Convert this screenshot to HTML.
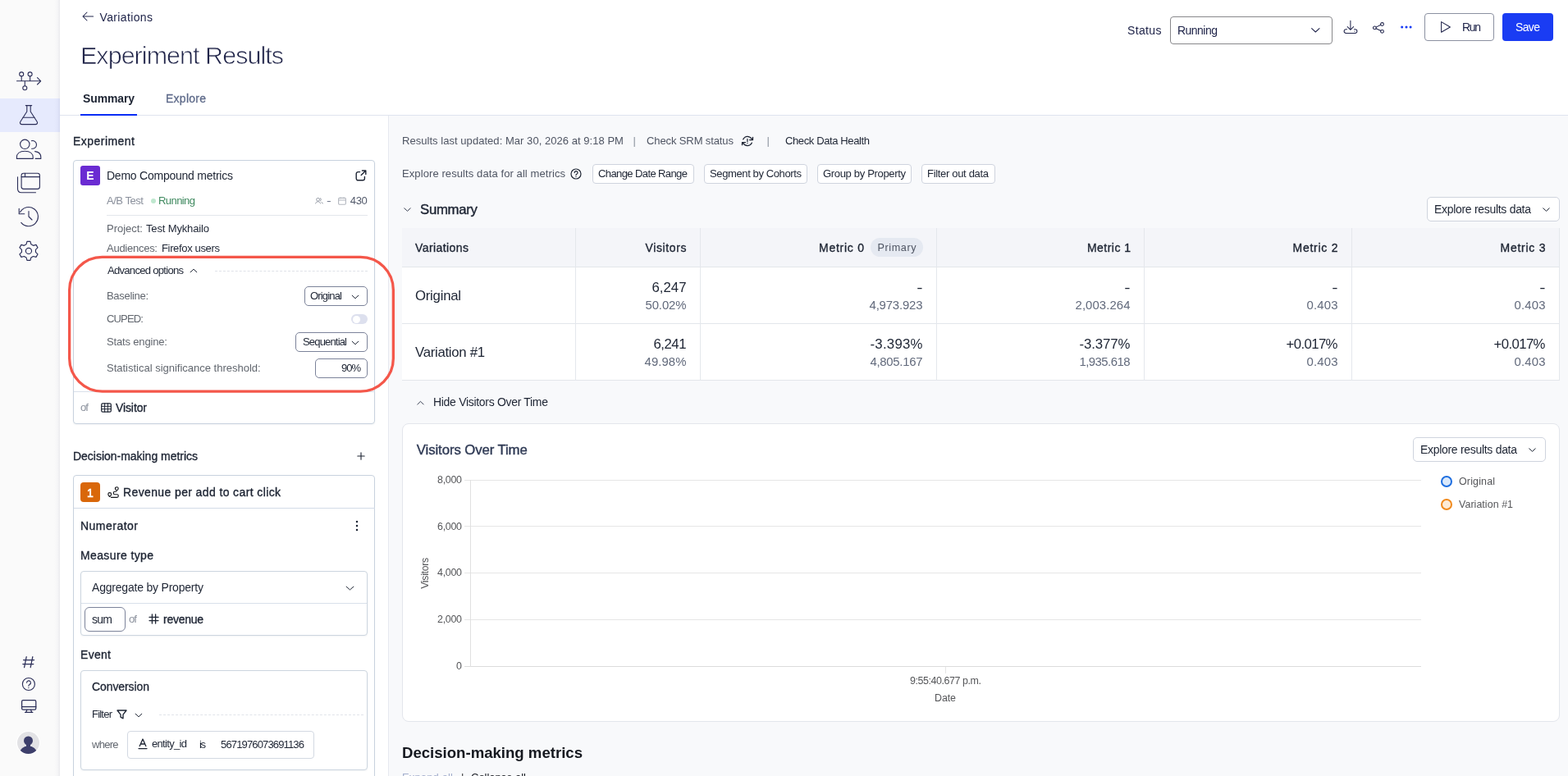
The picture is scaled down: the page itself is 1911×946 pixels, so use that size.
<!DOCTYPE html>
<html lang="en">
<head>
<meta charset="utf-8">
<title>Experiment Results</title>
<style>
*{box-sizing:border-box;margin:0;padding:0}
html,body{width:1911px;height:946px;overflow:hidden;background:#fff}
body{font-family:"Liberation Sans",sans-serif;color:#1d2433;font-size:13px;position:relative}
.a{position:absolute}
#tx{position:absolute;left:0;top:0;width:1911px;height:946px;will-change:transform;z-index:3}
.t{position:absolute;white-space:nowrap;line-height:20px}
svg{display:block;position:absolute;overflow:visible}
#side{position:absolute;left:0;top:0;width:73px;height:946px;background:linear-gradient(90deg,#fafafa 0,#fafafa 66px,#f6f6f7 70px,#ebebee 73px)}
#side .act{position:absolute;left:0;top:120px;width:73px;height:41px;background:linear-gradient(90deg,#e6eafd 0,#e6eafd 66px,#e2e6fa 70px,#d6daf2 73px)}
.si{fill:none;stroke:#2b2e58;stroke-width:1.1;stroke-linecap:round;stroke-linejoin:round}
#hdr{position:absolute;left:73px;top:0;width:1838px;height:141px;background:#fff;border-bottom:1px solid #dfe4ef}
#left{position:absolute;left:73px;top:141px;width:401px;height:805px;background:#fff;border-right:1px solid #e6e9f0}
#right{position:absolute;left:474px;top:141px;width:1437px;height:805px;background:#f8f9fb}
.card{position:absolute;background:#fff;border:1px solid #c8d2de;border-radius:4px}
.box{position:absolute;background:#fff;border:1px solid #ccd5df;border-radius:4px}
.btn{position:absolute;background:#fff;border:1px solid #cfd4de;border-radius:5px}
.sel{position:absolute;background:#fff;border:1px solid #6f7690;border-radius:5px}
.ln{position:absolute;background:#dfe4ec;height:1px}
.vl{position:absolute;background:#e4e7ec;width:1px}
.ic{fill:none;stroke:#1d2433;stroke-width:1.3;stroke-linecap:round;stroke-linejoin:round}
.hn{stroke:#22264d}
.hn path,.hn circle{stroke-width:1.05}
</style>
</head>
<body>
<div id="side"><div class="act"></div>
<svg class="si" style="left:0;top:0" width="73" height="946" viewBox="0 0 73 946">
<path d="M20.5 98.8H49.5M45.5 94.6l4.2 4.2-4.2 4.2M26.2 93v5.8M36.6 93v5.8M30.3 98.8v5.9"/>
<circle cx="26.2" cy="90.4" r="2.5"/><circle cx="36.6" cy="90.4" r="2.5"/><circle cx="30.3" cy="107.3" r="2.5"/>
<path d="M31.3 128.6h7.4M32.8 128.6v7.4l-7.9 12.3c-1.2 1.9 0 3.3 1.8 3.3h16.6c1.8 0 3-1.4 1.8-3.3l-7.9-12.3v-7.4M27.7 143.2h14.6"/>
<circle cx="30.3" cy="175.8" r="5.7"/>
<path d="M20.4 193.4v-1.6c0-4.2 3.4-7.5 9.9-7.5s9.9 3.3 9.9 7.5v1.6z"/>
<path d="M38.6 171.6a4.9 4.9 0 1 1 0 9.6M42.6 184.6c4.6 0.5 7.2 3.3 7.2 7.2v1.6h-6.6"/>
<rect x="26.1" y="211.2" width="22.3" height="19.2" rx="2.6"/>
<path d="M26.1 215.6h22.3M30.5 211.2v4.4M21.5 215.8v14.2c0 3 1.6 4.7 4.6 4.7h17.4"/>
<path d="M24.6 258.6a11.6 11.6 0 1 1 1.2 12.8M23.2 254.2v6.6h6.6M35 257.6v6.4l4 4"/>
<g transform="translate(34.95 305.9) scale(1.05) translate(-34.9 -305.4)"><circle cx="34.9" cy="305.4" r="3.4"/>
<path d="M33 294.45h3.8l.9 3.3 2.5 1.4 3.3-.9 1.9 3.3-2.4 2.4v2.9l2.4 2.4-1.9 3.3-3.3-.9-2.5 1.4-.9 3.3H33l-.9-3.3-2.5-1.4-3.3.9-1.9-3.3 2.4-2.4v-2.9l-2.4-2.4 1.9-3.3 3.3.9 2.5-1.4z"/></g>
<path d="M32.2 800.6l-2.6 13M39.8 800.6l-2.6 13M28.6 804.6h13M27.8 809.6h13" stroke-width="1.25"/>
<circle cx="34.9" cy="834" r="7.5" stroke-width="1.15"/>
<path d="M32.6 832.2a2.4 2.4 0 1 1 3.4 2.2c-.8.4-1.1.9-1.1 1.8M34.9 838.4v.2" stroke-width="1.15"/>
<rect x="26.6" y="853.6" width="17.2" height="11.6" rx="1.6" stroke-width="1.25"/>
<path d="M26.6 861.6h17.2M32.8 865.4l-1 2.8M37.6 865.4l1 2.8M30.6 868.4h9.2" stroke-width="1.25"/>
</svg>
<svg style="left:20px;top:891px" width="29" height="29" viewBox="0 0 29 29"><defs><clipPath id="av"><circle cx="14.5" cy="14.5" r="13.5"/></clipPath></defs>
<circle cx="14.5" cy="14.5" r="14.5" fill="#fff"/><circle cx="14.5" cy="14.5" r="13.5" fill="#e2e2e5"/>
<g clip-path="url(#av)" fill="#3d3f6b"><circle cx="14.5" cy="12" r="5.500"/><rect x="12" y="15" width="5" height="5"/><ellipse cx="14.500" cy="27" rx="10.500" ry="8.400"/></g></svg>
</div>
<div id="hdr"></div>
<svg class="ic hn" style="left:99px;top:13px" width="16" height="14" viewBox="0 0 16 14"><path d="M14.6 7H2.2M7 2L2 7l5 5" stroke-width="1.2"/></svg>
<div class="a" style="left:98px;top:139px;width:68.5px;height:2px;background:#0a2cf5"></div>
<div class="sel" style="left:1426px;top:20px;width:198px;height:34px;border-color:#88888b;border-radius:4px"></div>
<svg class="ic hn" style="left:1597.5px;top:33.5px" width="11" height="6" viewBox="0 0 11 6"><path d="M.6 .6l4.700 4.400 4.700-4.400" stroke-width="1.1"/></svg>
<svg class="ic hn" style="left:1637px;top:24px" width="18" height="18" viewBox="0 0 18 18"><path d="M8.9 1.2v11M5.2 8.6l3.7 3.7 3.7-3.7M4.6 11.8H3.4a2.2 2.2 0 0 0 0 4.6h11.2a2.2 2.2 0 0 0 0-4.6h-1.2M14 14.1v.1" stroke-width="1.2"/></svg>
<svg class="ic hn" style="left:1672px;top:26px" width="16" height="16" viewBox="0 0 16 16"><circle cx="3.4" cy="7.9" r="1.9"/><circle cx="12.5" cy="3.5" r="1.9"/><circle cx="12.5" cy="12.3" r="1.9"/><path d="M5.1 7.1l5.7-2.8M5.1 8.7l5.7 2.8" stroke-width="1.2"/></svg>
<svg style="left:1706px;top:31px" width="16" height="4" viewBox="0 0 16 4" fill="#1a3df5"><circle cx="2.7" cy="2" r="1.55"/><circle cx="8" cy="2" r="1.55"/><circle cx="13.1" cy="2" r="1.55"/></svg>
<div class="sel" style="left:1736px;top:16px;width:85px;height:34px;border-color:#8b91a1;border-radius:4px"></div>
<svg class="ic hn" style="left:1755px;top:25px" width="14" height="16" viewBox="0 0 14 16"><path d="M1.6 1.6v12.6L12.4 8z" stroke-width="1.2"/></svg>
<div class="a" style="left:1831px;top:16px;width:62px;height:34px;background:#1a3cf3;border-radius:4px"></div>
<div id="left"></div>
<div class="card" style="left:89px;top:195px;width:368px;height:322px;box-shadow:0 1px 2px rgba(20,30,60,.05)"></div>
<div class="a" style="left:98px;top:202px;width:24px;height:24px;background:#6a2bd2;border-radius:3px"></div>
<svg class="ic" style="left:433px;top:207px" width="14" height="14" viewBox="0 0 14 14"><path d="M5.6 2.6H3.4A2.2 2.2 0 0 0 1.2 4.8v5.8a2.2 2.2 0 0 0 2.2 2.2h5.8a2.2 2.2 0 0 0 2.2-2.2V8.4M8.4 1h4.4v4.4M12.6 1.2L7.2 6.6" stroke-width="1.4"/></svg>
<div class="a" style="left:184px;top:242px;width:6px;height:6px;border-radius:3px;background:#bfe8cf"></div>
<svg style="left:384px;top:241px;fill:none;stroke:#8a909c;stroke-width:0.9" width="10" height="8" viewBox="0 0 10 8"><circle cx="3.6" cy="2.3" r="1.9"/><path d="M6 .5a1.9 1.9 0 0 1 0 3.6M.6 7.4c.4-1.8 1.5-2.6 3-2.6s2.6.8 3 2.6M7.6 5.4c1 .3 1.6 1 1.8 2"/></svg>
<svg style="left:412px;top:239.500px;fill:none;stroke:#b4b8c0;stroke-width:1.1" width="10" height="10" viewBox="0 0 10 10"><rect x=".6" y="1.4" width="8.8" height="7.8" rx="1.2"/><path d="M.6 4h8.8M3 .4v1.8M7 .4v1.8"/></svg>
<div class="ln" style="left:130px;top:262px;width:318px;background:#e3e6ec"></div>
<svg class="ic" style="left:231px;top:327px" width="10" height="6" viewBox="0 0 10 6"><path d="M1.200 4.800l3.800-3.600 3.800 3.600" stroke-width="1"/></svg>
<div class="a" style="left:262px;top:330px;width:186px;height:0;border-top:1px dashed #dfe2e8"></div>
<div class="sel" style="left:371px;top:349px;width:77px;height:24px;border-color:#7c839a"></div>
<svg class="ic" style="left:428px;top:358.5px" width="10" height="6" viewBox="0 0 10 6"><path d="M1.200 1.200l3.800 3.600 3.800-3.600" stroke-width="1"/></svg>
<div class="a" style="left:428px;top:383px;width:20px;height:12px;border-radius:6px;background:#dde0ee"></div><div class="a" style="left:429.500px;top:384.500px;width:9px;height:9px;border-radius:4.500px;background:#fff"></div>
<div class="sel" style="left:360px;top:405px;width:88px;height:24px;border-color:#7c839a"></div>
<svg class="ic" style="left:428px;top:414.5px" width="10" height="6" viewBox="0 0 10 6"><path d="M1.200 1.200l3.800 3.600 3.800-3.600" stroke-width="1"/></svg>
<div class="sel" style="left:384px;top:437px;width:64px;height:24px;border-color:#7c839a"></div>
<div class="ln" style="left:90px;top:477px;width:367px;background:#d9e0ea"></div>
<svg class="ic" style="left:123px;top:491px" width="13" height="12" viewBox="0 0 13 12"><rect x=".7" y=".9" width="11.6" height="10.2" rx="1.4" stroke-width="1.2"/><path d="M.7 4.3h11.6M.7 7.7h11.6M4.6 .9v10.2M8.4 .9v10.2" stroke-width="1"/></svg>
<svg style="left:0;top:0;z-index:5" width="1911" height="946" viewBox="0 0 1911 946"><rect x="84.65" y="313.45" width="394.7" height="163.6" rx="40" ry="40" fill="none" stroke="#f4574a" stroke-width="3.3"/></svg>
<svg class="ic" style="left:435px;top:551px" width="10" height="10" viewBox="0 0 10 10"><path d="M5 .8v8.4M.8 5h8.4" stroke-width="1.1"/></svg>
<div class="card" style="left:89px;top:579px;width:368px;height:380px"></div>
<div class="a" style="left:98px;top:588px;width:24px;height:24px;background:#d9670a;border-radius:4px"></div>
<svg class="ic" style="left:131px;top:593px" width="14" height="14" viewBox="0 0 14 14"><path d="M11.3 5.100C9.900 4 9.400 3.200 9.400 2.600a1.900 1.900 0 0 1 3.800 0C13.200 3.200 12.700 4 11.300 5.100zM2.700 12.500C1.300 11.300.8 10.300.8 9.550a1.900 1.900 0 0 1 3.800 0C4.600 10.300 4.100 11.300 2.700 12.500zM10.800 6.200H9a1.750 1.750 0 0 0 0 3.500h2.500a1.800 1.800 0 0 1 0 3.600H4.400" stroke-width="1.15" stroke="#16181d"/></svg>
<div class="ln" style="left:90px;top:619px;width:367px;background:#d3dbe7"></div>
<svg style="left:432.5px;top:634px" width="4" height="14" viewBox="0 0 4 14" fill="#1d2433"><circle cx="2" cy="2" r="1.25"/><circle cx="2" cy="7" r="1.25"/><circle cx="2" cy="12" r="1.25"/></svg>
<div class="box" style="left:98px;top:696px;width:350px;height:79px;box-shadow:0 1px 2px rgba(20,30,60,.05)"></div>
<svg class="ic" style="left:420.5px;top:713.5px" width="11" height="6" viewBox="0 0 11 6"><path d="M1.200 1.200l4.300 3.800 4.300-3.800" stroke-width="1"/></svg>
<div class="ln" style="left:99px;top:735px;width:348px;background:#d9e0ea"></div>
<div class="sel" style="left:103px;top:740px;width:50px;height:30px;border-color:#7c839a;border-radius:6px"></div>
<svg class="ic" style="left:181px;top:748px" width="13" height="13" viewBox="0 0 13 13"><path d="M4.400 1v11M8.600 1v11M1 4.400h11M1 8.600h11" stroke-width="1.3"/></svg>
<div class="box" style="left:98px;top:817px;width:350px;height:122px;box-shadow:0 1px 2px rgba(20,30,60,.05)"></div>
<svg class="ic" style="left:142px;top:865px" width="13" height="12" viewBox="0 0 13 12"><path d="M1 1h11L8 6.200v4.600L5 9.200v-3z" stroke-width="1.35"/></svg>
<svg class="ic" style="left:164px;top:868.5px" width="10" height="6" viewBox="0 0 10 6"><path d="M1.200 1.200l3.800 3.600 3.800-3.600" stroke-width="1"/></svg>
<div class="a" style="left:194px;top:871px;width:249px;height:0;border-top:1px dashed #e1e4ea"></div>
<div class="box" style="left:155px;top:891px;width:228px;height:34px;border-color:#d3d9e2"></div>
<svg class="ic" style="left:168px;top:900px" width="12" height="14" viewBox="0 0 12 14"><path d="M2.200 9.600L6 1l3.800 8.600M3.400 7h5.200M1 12.600h10" stroke-width="1.3"/></svg>
<div id="right"></div>
<svg class="ic" style="left:904px;top:165px" width="14" height="14" viewBox="0 0 14 14"><path d="M1.700 4.900C3 2.400 4.800 1.300 6.800 1.300c2.400 0 4.400 1.400 5.800 3.400M13.500 2.300v3.200h-4M12.300 9.100C11 11.500 9.100 12.600 6.900 12.600c-2.300 0-4.300-1.300-5.700-3.400M.5 11.700V8.500h4M6.900 4.400v3.300M6.900 9.600v.1" stroke-width="1.25"/></svg>
<svg class="ic" style="left:695px;top:205px" width="14" height="14" viewBox="0 0 14 14"><circle cx="7" cy="7" r="6" stroke-width="1.2"/><path d="M5.200 5.600a1.900 1.900 0 1 1 2.700 1.700c-.6.300-.9.700-.9 1.300M7 10.300v.1" stroke-width="1.200"/></svg>
<div class="btn" style="left:722px;top:200px;width:124px;height:24px;border-radius:4px"></div>
<div class="btn" style="left:858px;top:200px;width:126px;height:24px;border-radius:4px"></div>
<div class="btn" style="left:996px;top:200px;width:115px;height:24px;border-radius:4px"></div>
<div class="btn" style="left:1123px;top:200px;width:90px;height:24px;border-radius:4px"></div>
<svg class="ic" style="left:492px;top:253px;stroke:#3a4255" width="9" height="6" viewBox="0 0 9 6"><path d="M.8 .8l3.700 3.600L8.200 .8" stroke-width="1"/></svg>
<div class="btn" style="left:1739px;top:240px;width:162px;height:30px"></div>
<svg class="ic" style="left:1879.500px;top:253px" width="9" height="6" viewBox="0 0 9 6"><path d="M.8 .8l3.700 3.600L8.200 .8" stroke-width="1"/></svg>
<div class="a" style="left:490px;top:278px;width:1411px;height:186px;background:#fff"></div>
<div class="a" style="left:490px;top:278px;width:1411px;height:47px;background:#f4f5f9"></div>
<div class="ln" style="left:490px;top:325px;width:1411px;background:#e3e6eb"></div>
<div class="ln" style="left:490px;top:394px;width:1411px;background:#e3e6eb"></div>
<div class="ln" style="left:490px;top:463px;width:1411px;background:#e3e6eb"></div>
<div class="vl" style="left:701px;top:278px;height:186px"></div>
<div class="vl" style="left:853px;top:278px;height:186px"></div>
<div class="vl" style="left:1141px;top:278px;height:186px"></div>
<div class="vl" style="left:1394px;top:278px;height:186px"></div>
<div class="vl" style="left:1647px;top:278px;height:186px"></div>
<div class="vl" style="left:1900px;top:278px;height:186px"></div>
<div class="a" style="left:1061px;top:290px;width:64px;height:23px;border-radius:12px;background:#e5e9f1"></div>
<svg class="ic" style="left:508px;top:487.500px;stroke:#3a4255" width="9" height="6" viewBox="0 0 9 6"><path d="M.8 5l3.700-3.700L8.200 5" stroke-width="1"/></svg>
<div class="a" style="left:490px;top:516px;width:1411px;height:364px;background:#fff;border:1px solid #e3e6ec;border-radius:8px"></div>
<div class="btn" style="left:1722px;top:533px;width:162px;height:30px"></div>
<svg class="ic" style="left:1862.500px;top:546px" width="9" height="6" viewBox="0 0 9 6"><path d="M.8 .8l3.700 3.600L8.200 .8" stroke-width="1"/></svg>
<div class="ln" style="left:566px;top:585px;width:1166px;background:#e6e6e6"></div>
<div class="ln" style="left:566px;top:641px;width:1166px;background:#e6e6e6"></div>
<div class="ln" style="left:566px;top:698px;width:1166px;background:#e6e6e6"></div>
<div class="ln" style="left:566px;top:755px;width:1166px;background:#e6e6e6"></div>
<div class="ln" style="left:566px;top:812px;width:1166px;background:#dcdcdc"></div>
<div class="vl" style="left:573px;top:585px;height:228px;background:#e0e0e0"></div>
<div class="vl" style="left:1152px;top:813px;height:8px;background:#e6e6e6"></div>
<div class="a" style="left:1756px;top:580px;width:14px;height:14px;border-radius:7px;border:2px solid #1f6fe0;background:#dbe9fb"></div>
<div class="a" style="left:1756px;top:608px;width:14px;height:14px;border-radius:7px;border:2px solid #f08a1d;background:#fdebd6"></div>
<div id="tx">
<div class="t" style="top:11px;font-size:13.97px;color:#20254a;letter-spacing:0.378px;left:121.5px;">Variations</div>
<div class="t" style="top:57px;font-size:30.40px;color:#1f2348;letter-spacing:-0.912px;left:98px;-webkit-text-stroke:0.7px #fff;">Experiment Results</div>
<div class="t" style="top:110px;font-size:13.97px;font-weight:700;letter-spacing:-0.112px;left:101px;">Summary</div>
<div class="t" style="top:110px;font-size:13.97px;color:#5f6b8a;letter-spacing:0.271px;-webkit-text-stroke:0.3px currentColor;left:202px;">Explore</div>
<div class="t" style="top:27px;font-size:13.97px;color:#20254a;letter-spacing:0.378px;left:1374px;">Status</div>
<div class="t" style="top:27px;font-size:13.97px;color:#20254a;letter-spacing:-0.508px;left:1435px;">Running</div>
<div class="t" style="top:23px;font-size:13.97px;color:#20254a;letter-spacing:-1.320px;left:1782px;">Run</div>
<div class="t" style="top:23px;font-size:13.97px;color:#fff;letter-spacing:-0.615px;left:1847px;">Save</div>
<div class="t" style="top:162px;font-size:13.97px;letter-spacing:0.483px;-webkit-text-stroke:0.35px currentColor;left:89px;">Experiment</div>
<div class="t" style="top:204px;font-size:13.97px;font-weight:700;color:#fff;left:105.34px;">E</div>
<div class="t" style="top:204px;font-size:13.97px;letter-spacing:-0.219px;left:130px;">Demo Compound metrics</div>
<div class="t" style="top:235px;font-size:13.04px;color:#8a909c;letter-spacing:-0.471px;left:130px;">A/B Test</div>
<div class="t" style="top:235px;font-size:13.04px;color:#408a60;letter-spacing:-0.591px;left:193px;">Running</div>
<div class="t" style="top:235px;font-size:13.04px;color:#6b7386;left:398px;transform:scaleX(1.3);transform-origin:left;">-</div>
<div class="t" style="top:235px;font-size:13.04px;color:#535a6b;letter-spacing:-0.375px;left:426.80px;">430</div>
<div class="t" style="top:269px;font-size:13.04px;color:#62676f;letter-spacing:-0.027px;left:130px;">Project:</div>
<div class="t" style="top:269px;font-size:13.04px;letter-spacing:-0.161px;left:178px;">Test Mykhailo</div>
<div class="t" style="top:293px;font-size:13.04px;color:#62676f;letter-spacing:-0.276px;left:130px;">Audiences:</div>
<div class="t" style="top:293px;font-size:13.04px;letter-spacing:-0.359px;left:197px;">Firefox users</div>
<div class="t" style="top:320px;font-size:13.04px;letter-spacing:-0.707px;left:131px;">Advanced options</div>
<div class="t" style="top:351px;font-size:13.04px;color:#62676f;letter-spacing:-0.326px;left:130px;">Baseline:</div>
<div class="t" style="top:351px;font-size:13.04px;letter-spacing:-0.844px;left:378px;">Original</div>
<div class="t" style="top:379px;font-size:13.04px;color:#62676f;letter-spacing:-0.850px;left:130px;">CUPED:</div>
<div class="t" style="top:407px;font-size:13.04px;color:#62676f;letter-spacing:-0.173px;left:130px;">Stats engine:</div>
<div class="t" style="top:407px;font-size:13.04px;letter-spacing:-0.844px;left:369px;">Sequential</div>
<div class="t" style="top:439px;font-size:13.04px;color:#62676f;letter-spacing:-0.021px;left:130px;">Statistical significance threshold:</div>
<div class="t" style="top:439px;font-size:13.04px;letter-spacing:-1.047px;left:416.00px;">90%</div>
<div class="t" style="top:487px;font-size:13.04px;color:#8a909c;letter-spacing:-0.875px;left:98px;">of</div>
<div class="t" style="top:487px;font-size:13.97px;letter-spacing:-0.094px;-webkit-text-stroke:0.35px currentColor;left:141px;">Visitor</div>
<div class="t" style="top:546px;font-size:13.97px;letter-spacing:-0.007px;-webkit-text-stroke:0.35px currentColor;left:89px;">Decision-making metrics</div>
<div class="t" style="top:591px;font-size:13.97px;color:#fff;-webkit-text-stroke:0.6px currentColor;left:106.11px;">1</div>
<div class="t" style="top:590px;font-size:13.97px;letter-spacing:0.396px;-webkit-text-stroke:0.35px currentColor;left:150px;">Revenue per add to cart click</div>
<div class="t" style="top:631px;font-size:13.97px;letter-spacing:0.502px;-webkit-text-stroke:0.35px currentColor;left:98px;">Numerator</div>
<div class="t" style="top:667px;font-size:13.97px;letter-spacing:0.396px;-webkit-text-stroke:0.35px currentColor;left:98px;">Measure type</div>
<div class="t" style="top:706px;font-size:13.97px;letter-spacing:-0.189px;left:112px;">Aggregate by Property</div>
<div class="t" style="top:745px;font-size:13.97px;letter-spacing:-0.695px;left:112px;">sum</div>
<div class="t" style="top:745px;font-size:13.04px;color:#8a909c;letter-spacing:-0.875px;left:157px;">of</div>
<div class="t" style="top:745px;font-size:13.97px;letter-spacing:-0.247px;-webkit-text-stroke:0.35px currentColor;left:199px;">revenue</div>
<div class="t" style="top:788px;font-size:13.97px;letter-spacing:0.316px;-webkit-text-stroke:0.35px currentColor;left:98px;">Event</div>
<div class="t" style="top:827px;font-size:13.97px;letter-spacing:-0.073px;-webkit-text-stroke:0.3px currentColor;left:112px;">Conversion</div>
<div class="t" style="top:861px;font-size:13.04px;letter-spacing:-0.794px;left:112px;">Filter</div>
<div class="t" style="top:898px;font-size:13.04px;color:#62676f;letter-spacing:-0.750px;left:112px;">where</div>
<div class="t" style="top:897px;font-size:13.04px;letter-spacing:-0.693px;left:185px;">entity_id</div>
<div class="t" style="top:898px;font-size:13.04px;letter-spacing:-1.422px;left:243px;">is</div>
<div class="t" style="top:898px;font-size:13.04px;letter-spacing:-0.867px;left:269px;">5671976073691136</div>
<div class="t" style="top:162px;font-size:13.04px;color:#4f5563;letter-spacing:0.028px;left:490px;">Results last updated: Mar 30, 2026 at 9:18 PM</div>
<div class="t" style="top:162px;font-size:13.04px;color:#8a909c;left:771.5px;">|</div>
<div class="t" style="top:162px;font-size:13.04px;color:#4f5563;letter-spacing:-0.127px;left:788px;">Check SRM status</div>
<div class="t" style="top:162px;font-size:13.04px;color:#8a909c;left:934.5px;">|</div>
<div class="t" style="top:162px;font-size:13.04px;letter-spacing:-0.398px;left:957px;">Check Data Health</div>
<div class="t" style="top:202px;font-size:13.04px;color:#4f5563;letter-spacing:0.078px;left:490px;">Explore results data for all metrics</div>
<div class="t" style="top:202px;font-size:13.04px;letter-spacing:-0.614px;left:729px;">Change Date Range</div>
<div class="t" style="top:202px;font-size:13.04px;letter-spacing:-0.400px;left:865px;">Segment by Cohorts</div>
<div class="t" style="top:202px;font-size:13.04px;letter-spacing:-0.343px;left:1003px;">Group by Property</div>
<div class="t" style="top:202px;font-size:13.04px;letter-spacing:-0.335px;left:1130px;">Filter out data</div>
<div class="t" style="top:246px;font-size:16.77px;letter-spacing:-0.289px;-webkit-text-stroke:0.4px currentColor;left:512px;">Summary</div>
<div class="t" style="top:245px;font-size:13.97px;letter-spacing:-0.288px;left:1748px;">Explore results data</div>
<div class="t" style="top:292px;font-size:13.97px;letter-spacing:0.434px;-webkit-text-stroke:0.35px currentColor;left:506px;">Variations</div>
<div class="t" style="top:292px;font-size:13.97px;letter-spacing:0.636px;-webkit-text-stroke:0.35px currentColor;left:786.50px;">Visitors</div>
<div class="t" style="top:292px;font-size:13.97px;letter-spacing:0.759px;-webkit-text-stroke:0.35px currentColor;left:998px;">Metric 0</div>
<div class="t" style="top:292px;font-size:12.63px;color:#4f5563;letter-spacing:0.583px;left:1069.5px;">Primary</div>
<div class="t" style="top:292px;font-size:13.97px;letter-spacing:0.473px;-webkit-text-stroke:0.35px currentColor;left:1325.00px;">Metric 1</div>
<div class="t" style="top:292px;font-size:13.97px;letter-spacing:0.759px;-webkit-text-stroke:0.35px currentColor;left:1575.50px;">Metric 2</div>
<div class="t" style="top:292px;font-size:13.97px;letter-spacing:0.759px;-webkit-text-stroke:0.35px currentColor;left:1828.50px;">Metric 3</div>
<div class="t" style="top:351px;font-size:16.77px;letter-spacing:-0.254px;left:506px;">Original</div>
<div class="t" style="top:420px;font-size:16.77px;letter-spacing:-0.294px;left:506px;">Variation #1</div>
<div class="t" style="top:341px;font-size:16.77px;letter-spacing:0.008px;left:794.50px;">6,247</div>
<div class="t" style="top:362px;font-size:14.90px;color:#626a7c;letter-spacing:-0.103px;left:786.50px;">50.02%</div>
<div class="t" style="top:341px;font-size:16.77px;left:1118.91px;transform:scaleX(1.3);transform-origin:right;">-</div>
<div class="t" style="top:362px;font-size:14.90px;color:#626a7c;letter-spacing:-0.156px;left:1059.50px;">4,973.923</div>
<div class="t" style="top:341px;font-size:16.77px;left:1371.91px;transform:scaleX(1.3);transform-origin:right;">-</div>
<div class="t" style="top:362px;font-size:14.90px;color:#626a7c;letter-spacing:0.094px;left:1310.50px;">2,003.264</div>
<div class="t" style="top:341px;font-size:16.77px;left:1624.91px;transform:scaleX(1.3);transform-origin:right;">-</div>
<div class="t" style="top:362px;font-size:14.90px;color:#626a7c;letter-spacing:0.184px;left:1592.50px;">0.403</div>
<div class="t" style="top:341px;font-size:16.77px;left:1877.91px;transform:scaleX(1.3);transform-origin:right;">-</div>
<div class="t" style="top:362px;font-size:14.90px;color:#626a7c;letter-spacing:0.184px;left:1845.50px;">0.403</div>
<div class="t" style="top:410px;font-size:16.77px;letter-spacing:-0.492px;left:796.50px;">6,241</div>
<div class="t" style="top:431px;font-size:14.90px;color:#626a7c;letter-spacing:0.097px;left:785.50px;">49.98%</div>
<div class="t" style="top:410px;font-size:16.77px;letter-spacing:0.258px;left:1060.50px;">-3.393%</div>
<div class="t" style="top:431px;font-size:14.90px;color:#626a7c;letter-spacing:-0.281px;left:1060.50px;">4,805.167</div>
<div class="t" style="top:410px;font-size:16.77px;letter-spacing:-0.076px;left:1315.50px;">-3.377%</div>
<div class="t" style="top:431px;font-size:14.90px;color:#626a7c;letter-spacing:-0.531px;left:1315.50px;">1,935.618</div>
<div class="t" style="top:410px;font-size:16.77px;letter-spacing:-0.609px;left:1567.50px;">+0.017%</div>
<div class="t" style="top:431px;font-size:14.90px;color:#626a7c;letter-spacing:0.184px;left:1592.50px;">0.403</div>
<div class="t" style="top:410px;font-size:16.77px;letter-spacing:-0.609px;left:1820.50px;">+0.017%</div>
<div class="t" style="top:431px;font-size:14.90px;color:#626a7c;letter-spacing:0.184px;left:1845.50px;">0.403</div>
<div class="t" style="top:480px;font-size:13.97px;letter-spacing:-0.294px;left:528px;">Hide Visitors Over Time</div>
<div class="t" style="top:539px;font-size:16.77px;color:#2f3a55;letter-spacing:-0.097px;-webkit-text-stroke:0.4px currentColor;left:507.8px;">Visitors Over Time</div>
<div class="t" style="top:538px;font-size:13.97px;letter-spacing:-0.288px;left:1731px;">Explore results data</div>
<div class="t" style="top:575px;font-size:12.42px;color:#555659;letter-spacing:-0.262px;left:533.00px;">8,000</div>
<div class="t" style="top:632px;font-size:12.42px;color:#555659;letter-spacing:-0.262px;left:533.00px;">6,000</div>
<div class="t" style="top:688px;font-size:12.42px;color:#555659;letter-spacing:-0.262px;left:533.00px;">4,000</div>
<div class="t" style="top:745px;font-size:12.42px;color:#555659;letter-spacing:-0.262px;left:533.00px;">2,000</div>
<div class="t" style="top:802px;font-size:12.42px;color:#555659;left:556.00px;">0</div>
<div class="t" style="top:689px;font-size:12.42px;color:#555659;letter-spacing:-0.350px;left:499.00px;transform:rotate(-90deg);">Visitors</div>
<div class="t" style="top:820px;font-size:12.42px;color:#555659;letter-spacing:-0.408px;left:1109.00px;">9:55:40.677 p.m.</div>
<div class="t" style="top:841px;font-size:12.42px;color:#555659;letter-spacing:-0.073px;left:1139.00px;">Date</div>
<div class="t" style="top:577px;font-size:12.42px;color:#555659;letter-spacing:0.179px;left:1778px;">Original</div>
<div class="t" style="top:605px;font-size:12.42px;color:#555659;letter-spacing:0.064px;left:1778px;">Variation #1</div>
<div class="t" style="top:908px;font-size:18.63px;font-weight:700;color:#15181f;letter-spacing:-0.013px;left:490px;">Decision-making metrics</div>
<div class="t" style="top:938px;font-size:13.04px;color:#a3aecd;letter-spacing:0.127px;left:490px;">Expand all</div>
<div class="t" style="top:938px;font-size:13.04px;color:#333;left:562px;">|</div>
<div class="t" style="top:938px;font-size:13.04px;color:#15181f;letter-spacing:-0.034px;left:574px;">Collapse all</div>
</div>
</body>
</html>
